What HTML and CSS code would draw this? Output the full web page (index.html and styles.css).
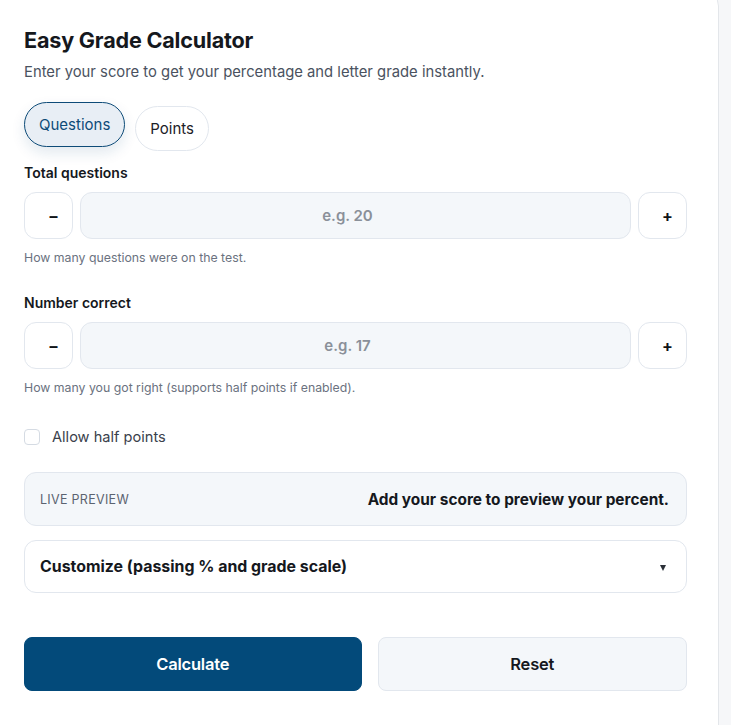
FILE: index.html
```html
<!DOCTYPE html>
<html lang="en">
<head>
<meta charset="utf-8">
<title>Easy Grade Calculator</title>
<link rel="stylesheet" href="styles.css">
</head>
<body>
<main class="card">
  <h1 class="title">Easy Grade Calculator</h1>
  <p class="subtitle">Enter your score to get your percentage and letter grade instantly.</p>

  <div class="tabs">
    <button class="tab tab-active" type="button">Questions</button>
    <button class="tab" type="button">Points</button>
  </div>

  <div class="field field-first">
    <label class="field-label" for="total">Total questions</label>
    <div class="stepper">
      <button class="step-btn" type="button">&ndash;</button>
      <input class="step-input" id="total" type="text" placeholder="e.g. 20">
      <button class="step-btn" type="button">+</button>
    </div>
    <p class="help">How many questions were on the test.</p>
  </div>

  <div class="field">
    <label class="field-label" for="correct">Number correct</label>
    <div class="stepper">
      <button class="step-btn" type="button">&ndash;</button>
      <input class="step-input" id="correct" type="text" placeholder="e.g. 17">
      <button class="step-btn" type="button">+</button>
    </div>
    <p class="help">How many you got right (supports half points if enabled).</p>
  </div>

  <label class="check">
    <input class="check-box" type="checkbox">
    <span>Allow half points</span>
  </label>

  <div class="preview">
    <span class="preview-tag">LIVE PREVIEW</span>
    <span class="preview-text">Add your score to preview your percent.</span>
  </div>

  <div class="customize">
    <span class="customize-text">Customize (passing % and grade scale)</span>
    <span class="caret"></span>
  </div>

  <div class="actions">
    <button class="btn btn-primary" type="button">Calculate</button>
    <button class="btn btn-secondary" type="button">Reset</button>
  </div>
</main>
</body>
</html>
```

FILE: styles.css
```css
* { box-sizing: border-box; }

html, body {
  margin: 0;
  padding: 0;
  background: #f6f7f9;
  overflow: hidden;
}

body {
  font-family: Inter, "Noto Sans", sans-serif;
  color: #14181f;
}

.card {
  width: 727px;
  margin: -10px 0 0 -8px;
  padding: 35px 31px 40px 31px;
  background: #ffffff;
  border: 1px solid #e3e6ea;
  border-radius: 16px;
  min-height: 760px;
}

.title {
  margin: 0;
  font-size: 21.6px;
  line-height: 28px;
  font-weight: 700;
  letter-spacing: -0.2px;
  color: #15181d;
}

.subtitle {
  margin: 7px 0 0;
  font-size: 14.8px;
  line-height: 22px;
  color: #4a5260;
}

.tabs {
  display: flex;
  gap: 10px;
  margin-top: 23px;
}

.tab {
  height: 45px;
  padding: 0 14px;
  border: 1px solid #e2e7ee;
  border-radius: 999px;
  background: #ffffff;
  font-family: Inter, "Noto Sans", sans-serif;
  font-size: 15px;
  color: #1c2027;
  cursor: pointer;
}

.tab-active {
  transform: translateY(-4px);
  background: #e8eef5;
  border-color: #0d4b78;
  color: #0d4b78;
  box-shadow: 0 6px 14px rgba(13, 75, 120, 0.12);
}

.field { margin-top: 27px; }
.field.field-first { margin-top: 12px; }

.field-label {
  display: block;
  font-size: 14px;
  line-height: 20px;
  font-weight: 600;
  color: #15181d;
  margin-bottom: 9px;
}

.stepper {
  display: grid;
  grid-template-columns: 49px 1fr 49px;
  column-gap: 7px;
  height: 47px;
}

.step-btn {
  border: 1px solid #e2e7ee;
  border-radius: 12px;
  background: #ffffff;
  font-family: Inter, "Noto Sans", sans-serif;
  font-size: 16px;
  font-weight: 700;
  color: #111418;
  padding: 0 0 0 10px;
  cursor: pointer;
}

.step-input {
  width: 100%;
  border: 1px solid #e2e7ee;
  border-radius: 12px;
  background: #f4f7fa;
  font-family: Inter, "Noto Sans", sans-serif;
  font-size: 15px;
  font-weight: 600;
  text-align: center;
  color: #15181d;
  padding: 0 16px 0 0;
  outline: none;
}

.step-input::placeholder {
  color: #8a9099;
  font-weight: 600;
}

.help {
  margin: 11px 0 0;
  font-size: 12.3px;
  line-height: 16px;
  color: #6b7280;
}

.check {
  display: flex;
  align-items: center;
  gap: 12px;
  margin-top: 31px;
  height: 20px;
  font-size: 14.6px;
  color: #3a414c;
}

.check-box {
  appearance: none;
  -webkit-appearance: none;
  width: 16px;
  height: 16px;
  margin: 0;
  border: 1px solid #d5dbe3;
  border-radius: 4px;
  background: #ffffff;
}

.preview {
  display: flex;
  align-items: center;
  justify-content: space-between;
  margin-top: 25px;
  height: 54px;
  padding: 0 17px 0 15px;
  background: #f4f7fa;
  border: 1px solid #e2e7ee;
  border-radius: 12px;
}

.preview-tag {
  font-size: 12.5px;
  letter-spacing: 0.3px;
  color: #5b6370;
}

.preview-text {
  font-size: 15.4px;
  font-weight: 700;
  color: #15181d;
}

.customize {
  display: flex;
  align-items: center;
  justify-content: space-between;
  margin-top: 14px;
  height: 53px;
  padding: 0 20px 0 15px;
  background: #ffffff;
  border: 1px solid #e2e7ee;
  border-radius: 12px;
}

.customize-text {
  font-size: 15.9px;
  font-weight: 700;
  color: #15181d;
}

.caret {
  width: 0;
  height: 0;
  border-left: 3.5px solid transparent;
  border-right: 3.5px solid transparent;
  border-top: 6px solid #2b3038;
  margin-top: 2px;
}

.actions {
  display: grid;
  grid-template-columns: 337fr 309fr;
  column-gap: 16px;
  margin-top: 44px;
}

.btn {
  height: 54px;
  border-radius: 8px;
  font-family: Inter, "Noto Sans", sans-serif;
  font-size: 16.5px;
  font-weight: 600;
  letter-spacing: -0.2px;
  cursor: pointer;
}

.btn-primary {
  background: #034a7a;
  border: 1px solid #034a7a;
  color: #ffffff;
}

.btn-secondary {
  background: #f4f7fa;
  border: 1px solid #e2e7ee;
  color: #15181d;
}
```
